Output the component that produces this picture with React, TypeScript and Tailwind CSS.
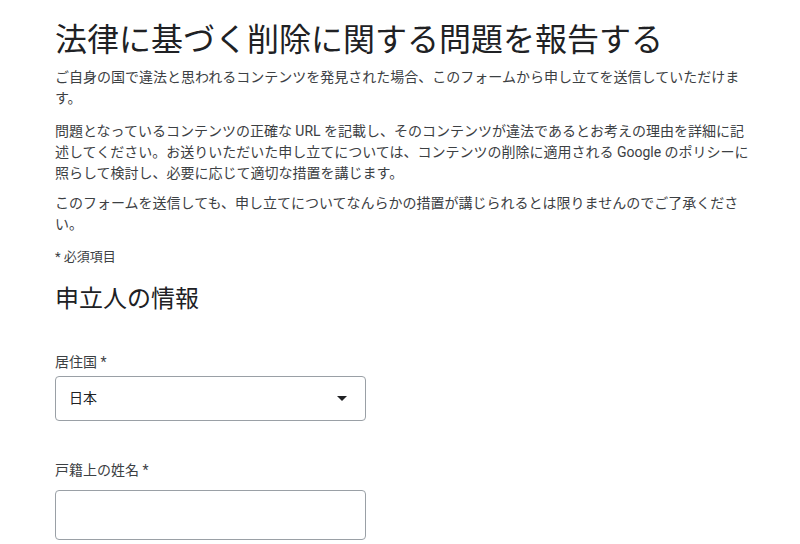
export default function App() {
  return (
    <div
      className="min-h-[544px] w-full bg-white text-[#3c4043]"
      style={{ fontFamily: 'Roboto, "Noto Sans CJK JP", sans-serif' }}
    >
      <div className="w-[700px] pl-[55px] pt-[18px] box-content">
        <h1 className="text-[32px] leading-[44px] text-[#202124] font-normal">
          法律に基づく削除に関する問題を報告する
        </h1>
        <p className="mt-[5px] text-[14px] leading-[21px]">
          ご自身の国で違法と思われるコンテンツを発見された場合、このフォームから申し立てを送信していただけます。
        </p>
        <p className="mt-[12px] text-[14px] leading-[21px]">
          問題となっているコンテンツの正確な URL を記載し、そのコンテンツが違法であるとお考えの理由を詳細に記述してください。お送りいただいた申し立てについては、コンテンツの削除に適用される Google のポリシーに照らして検討し、必要に応じて適切な措置を講じます。
        </p>
        <p className="mt-[9px] text-[14px] leading-[21px]">
          このフォームを送信しても、申し立てについてなんらかの措置が講じられるとは限りませんのでご了承ください。
        </p>
        <p className="mt-[12px] text-[13px] leading-[20px]">* 必須項目</p>
        <h2 className="mt-[16px] text-[24px] leading-[32px] text-[#202124] font-normal">
          申立人の情報
        </h2>

        <div className="mt-[37px] flex flex-col w-[311px]">
          <label className="text-[14px] leading-[20px]">居住国 *</label>
          <div className="mt-[4px] h-[45px] rounded-[4px] border border-[#9aa0a6] flex items-center justify-between pl-[13px] pr-[18px]">
            <span className="text-[14px] text-[#202124]">日本</span>
            <svg width="10" height="5" viewBox="0 0 10 5">
              <path d="M0 0 L10 0 L5 5 Z" fill="#202124" />
            </svg>
          </div>
        </div>

        <div className="mt-[39px] flex flex-col w-[311px]">
          <label className="text-[14px] leading-[20px]">戸籍上の姓名 *</label>
          <div className="mt-[10px] h-[50px] rounded-[4px] border border-[#9aa0a6]" />
        </div>
      </div>
      <div className="mt-[4px] h-[2px] w-full bg-[#e8e8e8]" />
    </div>
  );
}
